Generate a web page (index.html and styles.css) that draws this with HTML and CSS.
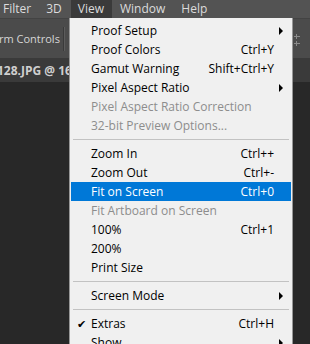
FILE: index.html
```html
<!DOCTYPE html>
<html lang="en">
<head>
    <meta charset="UTF-8">
    <title>View menu</title>
    <link rel="stylesheet" href="styles.css">
</head>
<body>
<div class="app">

    <!-- Menüleiste -->
    <div class="menubar">
        <span class="menubar-item">Filter</span>
        <span class="menubar-item">3D</span>
        <span class="menubar-item active">View</span>
        <span class="menubar-item">Window</span>
        <span class="menubar-item">Help</span>
    </div>

    <!-- Optionsleiste -->
    <div class="optionsbar">
        <span class="options-label">rm Controls</span>
        <span class="options-sep"></span>
        <span class="options-icons">
            <svg width="8" height="16" viewBox="0 0 8 16">
                <rect x="0" y="3" width="6" height="1" fill="#8a8a8a"/>
                <rect x="2" y="1" width="1" height="5" fill="#8a8a8a"/>
                <rect x="0" y="10" width="6" height="1" fill="#8a8a8a"/>
                <rect x="2" y="8" width="1" height="5" fill="#8a8a8a"/>
            </svg>
        </span>
    </div>

    <!-- Dokument-Tab -->
    <div class="tabbar">
        <span class="doc-tab">128.JPG @ 16</span>
    </div>

    <div class="workspace"></div>

    <!-- Ansicht-Menü -->
    <div class="dropdown">
        <div class="item"><span class="label">Proof Setup</span><span class="key"></span><span class="arrow"></span></div>
        <div class="item"><span class="label">Proof Colors</span><span class="key">Ctrl+Y</span></div>
        <div class="item"><span class="label">Gamut Warning</span><span class="key">Shift+Ctrl+Y</span></div>
        <div class="item"><span class="label">Pixel Aspect Ratio</span><span class="key"></span><span class="arrow"></span></div>
        <div class="item disabled"><span class="label">Pixel Aspect Ratio Correction</span></div>
        <div class="item disabled"><span class="label">32-bit Preview Options...</span></div>
        <div class="sep"></div>
        <div class="item"><span class="label">Zoom In</span><span class="key">Ctrl++</span></div>
        <div class="item"><span class="label">Zoom Out</span><span class="key">Ctrl+-</span></div>
        <div class="item selected"><span class="label">Fit on Screen</span><span class="key">Ctrl+0</span></div>
        <div class="item disabled"><span class="label">Fit Artboard on Screen</span></div>
        <div class="item"><span class="label">100%</span><span class="key">Ctrl+1</span></div>
        <div class="item"><span class="label">200%</span></div>
        <div class="item"><span class="label">Print Size</span></div>
        <div class="sep"></div>
        <div class="item"><span class="label">Screen Mode</span><span class="key"></span><span class="arrow"></span></div>
        <div class="sep"></div>
        <div class="item"><span class="check">✔</span><span class="label">Extras</span><span class="key">Ctrl+H</span></div>
        <div class="item"><span class="label">Show</span><span class="key"></span><span class="arrow"></span></div>
    </div>

</div>
</body>
</html>
```

FILE: styles.css
```css
body {
    margin: 0;
    padding: 0;
    background-color: #282828;
    font-family: "Open Sans", "Noto Sans", sans-serif;
    font-size: 12px;
}

.app {
    position: relative;
    width: 310px;
    height: 344px;
    overflow: hidden;
    display: flex;
    flex-direction: column;
}

/* Menüleiste */
.menubar {
    height: 18px;
    background-color: #535353;
    display: flex;
    align-items: center;
    color: #dcdcdc;
    white-space: nowrap;
}

.menubar-item {
    height: 18px;
    line-height: 18px;
    padding: 0 8px;
}

.menubar-item:first-child {
    padding-left: 3px;
    padding-right: 7px;
}

.menubar-item.active {
    background-color: #3a3a3a;
    padding: 0 8px 0 7px;
    margin-left: 1px;
}

/* Optionsleiste */
.optionsbar {
    height: 40px;
    background-color: #4b4b4b;
    border-top: 1px solid #434343;
    box-sizing: border-box;
    display: flex;
    align-items: center;
    color: #d6d6d6;
    font-size: 11px;
    white-space: nowrap;
}

.options-label {
    margin-left: -1px;
    width: 60px;
}

.options-sep {
    width: 1px;
    height: 24px;
    background-color: #3a3a3a;
    border-right: 1px solid #5c5c5c;
    margin-left: 4px;
}

.options-icons {
    margin-left: auto;
    margin-right: 8px;
    margin-top: 4px;
    display: flex;
}

/* Dokument-Tab */
.tabbar {
    height: 24px;
    background-color: #3a3a3a;
    display: flex;
    align-items: center;
    white-space: nowrap;
}

.doc-tab {
    color: #cfcfcf;
    font-weight: bold;
    font-size: 12px;
    margin-left: -3px;
}

.workspace {
    flex: 1;
    background-color: #282828;
}

/* Dropdown */
.dropdown {
    position: absolute;
    left: 69px;
    top: 18px;
    width: 224px;
    background-color: #f0f0f0;
    border: 1px solid #979797;
    border-top: none;
    box-sizing: border-box;
    padding: 3px 1px 0;
    color: #000;
}

.item {
    height: 19px;
    display: flex;
    align-items: center;
    position: relative;
    padding-left: 20px;
    white-space: nowrap;
}

.item .label {
    flex: 1;
}

.item .key {
    padding-right: 17px;
}

.item.disabled {
    color: #8d8d8d;
}

.item.selected {
    background-color: #0078d7;
    color: #fff;
}

.arrow {
    position: absolute;
    right: 8px;
    top: 6px;
    width: 0;
    height: 0;
    border-top: 4px solid transparent;
    border-bottom: 4px solid transparent;
    border-left: 4px solid #000;
}

.check {
    position: absolute;
    left: 6px;
    font-size: 11px;
}

.sep {
    height: 9px;
    display: flex;
    align-items: center;
    padding: 0 2px;
}

.sep::before {
    content: "";
    flex: 1;
    height: 1px;
    background-color: #c2c2c2;
}
```
